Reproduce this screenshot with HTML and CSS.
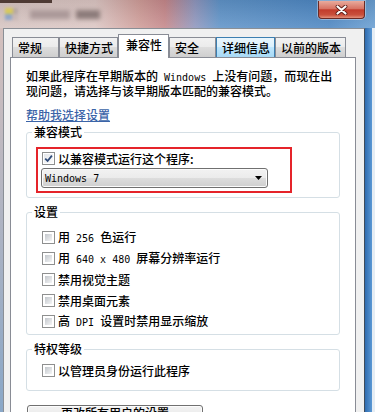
FILE: index.html
```html
<!DOCTYPE html>
<html lang="zh-CN">
<head>
    <meta charset="UTF-8">
    <meta name="viewport" content="width=device-width, initial-scale=1.0">
    <title>属性 - 兼容性</title>
    <link rel="stylesheet" href="styles.css">
</head>
<body>
    <div class="window">
        <div class="titlebar">
            <span class="app-icon"><i class="ic-a"></i><i class="ic-b"></i></span>
            <span class="blur-title"><i class="t1"></i><i class="t2"></i></span>
            <button class="close" title="关闭">
                <svg width="13" height="10" viewBox="0 0 13 10">
                    <path d="M2.5 1.5 L10.5 8.5 M10.5 1.5 L2.5 8.5" stroke="#5a1a14" stroke-width="3.8" stroke-linecap="round"/>
                    <path d="M2.5 1.5 L10.5 8.5 M10.5 1.5 L2.5 8.5" stroke="#fff" stroke-width="2.2" stroke-linecap="round"/>
                </svg>
            </button>
        </div>
        <div class="frame">
            <div class="dialog">
                <div class="tabs">
                    <div class="tab">常规</div>
                    <div class="tab">快捷方式</div>
                    <div class="tab active">兼容性</div>
                    <div class="tab">安全</div>
                    <div class="tab hover">详细信息</div>
                    <div class="tab">以前的版本</div>
                </div>
                <div class="page">
                    <p class="intro">如果此程序在早期版本的<span class="lat"> Windows </span>上没有问题，而现在出现问题，请选择与该早期版本匹配的兼容模式。</p>
                    <a class="help" href="#">帮助我选择设置</a>

                    <fieldset class="group group-compat">
                        <legend>兼容模式</legend>
                        <div class="mark">
                            <label class="check">
                                <span class="cb on">
                                    <svg width="9" height="9" viewBox="0 0 9 9"><path d="M1.2 4.6 L3.6 7 L7.9 1.6" stroke="#2e4a78" stroke-width="1.8" fill="none"/></svg>
                                </span>
                                <span>以兼容模式运行这个程序:</span>
                            </label>
                            <div class="select">
                                <span class="lat">Windows 7</span>
                                <svg width="7" height="4" viewBox="0 0 7 4"><path d="M0 0 H7 L3.5 4 Z" fill="#000"/></svg>
                            </div>
                        </div>
                    </fieldset>

                    <fieldset class="group group-settings">
                        <legend>设置</legend>
                        <label class="check"><span class="cb"></span><span>用<span class="lat"> 256 </span>色运行</span></label>
                        <label class="check"><span class="cb"></span><span>用<span class="lat"> 640 x 480 </span>屏幕分辨率运行</span></label>
                        <label class="check"><span class="cb"></span><span>禁用视觉主题</span></label>
                        <label class="check"><span class="cb"></span><span>禁用桌面元素</span></label>
                        <label class="check"><span class="cb"></span><span>高<span class="lat"> DPI </span>设置时禁用显示缩放</span></label>
                    </fieldset>

                    <fieldset class="group group-priv">
                        <legend>特权等级</legend>
                        <label class="check"><span class="cb"></span><span>以管理员身份运行此程序</span></label>
                    </fieldset>

                    <button class="btn">更改所有用户的设置</button>
                </div>
            </div>
        </div>
    </div>
</body>
</html>
```

FILE: styles.css
```css
* {
    box-sizing: border-box;
}
body {
    margin: 0;
    font-family: "Noto Sans CJK SC", "Noto Sans", sans-serif;
    font-size: 12px;
    font-weight: 500;
    color: #000;
    overflow: hidden;
}
.window {
    width: 375px;
    height: 412px;
    overflow: hidden;
    display: flex;
    flex-direction: column;
}

/* title bar (blurred in the shot) */
.titlebar {
    height: 28px;
    flex: none;
    display: flex;
    align-items: center;
    padding-left: 5px;
    background:
        linear-gradient(#4e3a34, #4e3a34) 0 0 / 52px 3px no-repeat,
        linear-gradient(rgba(0,0,0,0.08), rgba(255,255,255,0.12)),
        linear-gradient(to right, #d6c4c1 0, #dcc6c3 95px, #cf9c98 140px, #c5878a 165px, #8f96bd 195px, #5f93c8 220px, #4c86c2 330px, #6a9fd2 375px);
}
.app-icon {
    display: flex;
    flex-direction: column;
    width: 13px;
    filter: blur(1.5px);
}
.app-icon i {
    display: block;
    height: 6px;
}
.ic-a {
    background: linear-gradient(to right, #d7c95c 60%, #b7a9a4 60%);
}
.ic-b {
    background: linear-gradient(to right, #8fa6c8 55%, #c8b8b5 55%);
}
.blur-title {
    display: flex;
    gap: 6px;
    margin-left: 12px;
    filter: blur(2px);
}
.blur-title i {
    display: block;
    height: 9px;
}
.t1 {
    width: 40px;
    background: #ab9999;
}
.t2 {
    width: 24px;
    background: #8c7b7a;
}
.close {
    align-self: flex-start;
    margin: 1px 10px 0 auto;
    width: 47px;
    height: 18px;
    padding: 0;
    border: 1px solid #6b2a25;
    border-top: none;
    border-radius: 0 0 4px 4px;
    background: linear-gradient(#e9ab9d, #d77363 45%, #c23c2c 52%, #c9503c 82%, #e3917b);
    box-shadow: 0 0 0 1px rgba(255,255,255,0.35);
    display: flex;
    align-items: center;
    justify-content: center;
}

/* window frame around the dialog */
.frame {
    flex: 1;
    display: flex;
    padding: 0 10px 0 3px;
    background:
        linear-gradient(#d4c0bd, #86a6c8) left top / 3px 100% no-repeat,
        linear-gradient(to right, #2f6cb0, #5b98d4) right 3px top / 7px 100% no-repeat,
        #e6edf4;
}
.dialog {
    flex: 1;
    background: #f0f0f0;
    border: 1px solid #8a8f96;
    border-right-color: #3e4c5c;
    border-bottom: none;
    padding: 5px 8px 0 6px;
}

/* tabs */
.tabs {
    display: flex;
    align-items: flex-end;
    height: 23px;
    padding-left: 2px;
}
.tab {
    height: 20px;
    min-width: 47px;
    padding: 0 4px 0 5px;
    border: 1px solid #898c95;
    border-bottom: none;
    line-height: 19px;
    white-space: nowrap;
    background: linear-gradient(#f2f2f2, #ebebeb 50%, #dddddd 50%, #cfcfcf);
}
.tab.hover {
    border-color: #3c7fb1;
    background: linear-gradient(#eaf6fd, #d9f0fc 50%, #bee6fd 50%, #a7d9f5);
}
.tab.active {
    height: 24px;
    margin-bottom: -1px;
    padding: 0 6px 0 7px;
    line-height: 20px;
    background: #fff;
    position: relative;
    z-index: 1;
}
.page {
    background: #fff;
    border: 1px solid #898c95;
    padding: 0 15px;
}

.lat {
    font-family: "DejaVu Sans Mono", monospace;
    font-size: 10px;
    font-weight: 400;
    white-space: pre;
}
.intro {
    margin: 11px 0 0;
    line-height: 13px;
}
.help {
    display: block;
    width: max-content;
    margin-top: 11px;
    line-height: 14px;
    color: #3b64a8;
}

/* group boxes */
.group {
    margin: 3px 0 0;
    padding: 8px 0 4px;
    border: 1px solid #d5dfe5;
    border-radius: 3px;
    min-width: 0;
}
.group legend {
    margin-left: 5px;
    padding: 0 2px;
    line-height: 14px;
}
.group-settings {
    margin-top: 7px;
    padding: 8px 0 2px;
}
.group-priv {
    margin-top: 7px;
    padding: 4px 0 9px;
}

.check {
    display: flex;
    align-items: center;
    height: 21px;
    padding-left: 15px;
    line-height: 13px;
}
.cb {
    flex: none;
    width: 13px;
    height: 13px;
    margin-right: 3px;
    padding: 2px;
    border: 1px solid #8e8f8f;
    background: linear-gradient(135deg, #c3c7cc, #f4f5f6) content-box;
    display: flex;
    align-items: center;
    justify-content: center;
}
.cb.on {
    padding: 1px;
    background: linear-gradient(135deg, #e4e6ea, #fbfbfb) content-box;
}

/* red annotation round the compat setting */
.mark {
    margin-left: 9px;
    width: 256px;
    border: 2px solid #e5242a;
    padding: 0 0 3px;
}
.mark .check {
    height: 18px;
    padding-left: 4px;
}
.select {
    margin: 1px 0 0 3px;
    width: 227px;
    height: 20px;
    padding: 0 5px 0 3px;
    border: 1px solid #707070;
    border-radius: 3px;
    background: linear-gradient(#f2f2f2, #ebebeb 50%, #dddddd 50%, #cfcfcf);
    box-shadow: inset 0 0 0 1px #fbfbfb;
    display: flex;
    align-items: center;
    justify-content: space-between;
    line-height: 13px;
}

.btn {
    display: block;
    margin: 14px 0 0 1px;
    width: 176px;
    height: 23px;
    padding: 0 0 8px;
    border: 1px solid #707070;
    border-radius: 3px;
    background: linear-gradient(#f2f2f2, #ebebeb 50%, #dddddd 50%, #cfcfcf);
    box-shadow: inset 0 0 0 1px #fcfcfc;
    font: inherit;
    line-height: 14px;
    color: #000;
}
```
